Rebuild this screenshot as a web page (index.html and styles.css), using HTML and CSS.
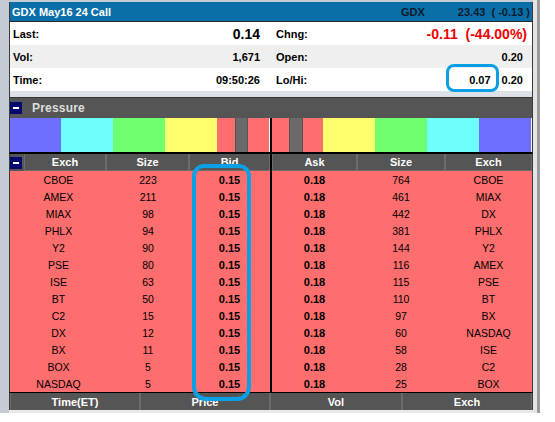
FILE: index.html
```html
<!DOCTYPE html>
<html>
<head>
<meta charset="utf-8">
<link rel="stylesheet" href="styles.css">
</head>
<body>
<div class="screen">
  <div class="gutter"></div>
  <div class="panel">
    <div class="title">
      <span class="title-name">GDX May16 24 Call</span>
      <span class="title-sym">GDX</span>
      <span class="title-px">23.43 &nbsp;( -0.13 )</span>
    </div>
    <div class="info">
      <div class="info-row">
        <div class="half"><span class="lbl">Last:</span><span class="val big">0.14</span></div>
        <div class="half rhalf"><span class="lbl">Chng:</span><span class="val chng">-0.11 &nbsp;(-44.00%)</span></div>
      </div>
      <div class="info-row alt">
        <div class="half"><span class="lbl">Vol:</span><span class="val">1,671</span></div>
        <div class="half rhalf"><span class="lbl">Open:</span><span class="val pr">0.20</span></div>
      </div>
      <div class="info-row">
        <div class="half"><span class="lbl">Time:</span><span class="val">09:50:26</span></div>
        <div class="half rhalf"><span class="lbl">Lo/Hi:</span><span class="lohi"><span class="val">0.07</span><span class="val hi">0.20</span></span></div>
      </div>
    </div>
    <div class="strip"></div>
    <div class="sec-head"><span class="tog"></span><span class="sec-title">Pressure</span></div>
    <div class="pressure">
      <div class="pside">
        <span class="blk c-blue w51"></span><span class="blk c-cyan w52"></span><span class="blk c-green w52"></span><span class="blk c-yellow w52"></span><span class="blk c-red w18"></span><span class="blk c-gray w13"></span><span class="blk c-red w21"></span><span class="blk c-white w1"></span>
      </div>
      <div class="pside">
        <span class="blk c-red w17"></span><span class="blk c-gray w14"></span><span class="blk c-red w20"></span><span class="blk c-yellow w52"></span><span class="blk c-green w52"></span><span class="blk c-cyan w52"></span><span class="blk c-blue w52"></span><span class="blk c-white w1"></span>
      </div>
    </div>
    <div class="book">
      <div class="side">
        <div class="hdr lhdr"><span class="hcell tcell"><span class="tog"></span></span><span class="hcell">Exch</span><span class="hcell">Size</span><span class="hcell">Bid</span></div>
        <div class="rows">
          <div class="row lrow"><span>CBOE</span><span>223</span><span class="b">0.15</span></div>
          <div class="row lrow"><span>AMEX</span><span>211</span><span class="b">0.15</span></div>
          <div class="row lrow"><span>MIAX</span><span>98</span><span class="b">0.15</span></div>
          <div class="row lrow"><span>PHLX</span><span>94</span><span class="b">0.15</span></div>
          <div class="row lrow"><span>Y2</span><span>90</span><span class="b">0.15</span></div>
          <div class="row lrow"><span>PSE</span><span>80</span><span class="b">0.15</span></div>
          <div class="row lrow"><span>ISE</span><span>63</span><span class="b">0.15</span></div>
          <div class="row lrow"><span>BT</span><span>50</span><span class="b">0.15</span></div>
          <div class="row lrow"><span>C2</span><span>15</span><span class="b">0.15</span></div>
          <div class="row lrow"><span>DX</span><span>12</span><span class="b">0.15</span></div>
          <div class="row lrow"><span>BX</span><span>11</span><span class="b">0.15</span></div>
          <div class="row lrow"><span>BOX</span><span>5</span><span class="b">0.15</span></div>
          <div class="row lrow"><span>NASDAQ</span><span>5</span><span class="b">0.15</span></div>
        </div>
      </div>
      <div class="side">
        <div class="hdr rhdr"><span class="hcell">Ask</span><span class="hcell">Size</span><span class="hcell">Exch</span></div>
        <div class="rows">
          <div class="row rrow"><span class="b">0.18</span><span>764</span><span>CBOE</span></div>
          <div class="row rrow"><span class="b">0.18</span><span>461</span><span>MIAX</span></div>
          <div class="row rrow"><span class="b">0.18</span><span>442</span><span>DX</span></div>
          <div class="row rrow"><span class="b">0.18</span><span>381</span><span>PHLX</span></div>
          <div class="row rrow"><span class="b">0.18</span><span>144</span><span>Y2</span></div>
          <div class="row rrow"><span class="b">0.18</span><span>116</span><span>AMEX</span></div>
          <div class="row rrow"><span class="b">0.18</span><span>115</span><span>PSE</span></div>
          <div class="row rrow"><span class="b">0.18</span><span>110</span><span>BT</span></div>
          <div class="row rrow"><span class="b">0.18</span><span>97</span><span>BX</span></div>
          <div class="row rrow"><span class="b">0.18</span><span>60</span><span>NASDAQ</span></div>
          <div class="row rrow"><span class="b">0.18</span><span>58</span><span>ISE</span></div>
          <div class="row rrow"><span class="b">0.18</span><span>28</span><span>C2</span></div>
          <div class="row rrow"><span class="b">0.18</span><span>25</span><span>BOX</span></div>
        </div>
      </div>
    </div>
    <div class="footer">
      <span class="fcell">Time(ET)</span><span class="fcell">Price</span><span class="fcell">Vol</span><span class="fcell">Exch</span>
    </div>
  </div>
  <div class="rgutter"><div class="rg-light"></div><div class="rg-line"></div></div>
  <div class="mark mark-lohi"></div>
  <div class="mark mark-bid"></div>
</div>
</body>
</html>
```

FILE: styles.css
```css
* { box-sizing: border-box; }
html, body { margin: 0; padding: 0; background: #ffffff; }
body { font-family: "Liberation Sans", Arial, sans-serif; font-size: 11px; color: #000; }

.screen { position: relative; display: flex; width: 555px; height: 422px; }
.gutter { width: 9px; height: 413px; background: #c4cbd3; }
.panel {
  width: 524px; height: 413px;
  padding-top: 2px;
  background: #e9e9e9;
  display: flex; flex-direction: column;
}
.panel > * { border-left: 1px solid #3a3a3a; border-right: 1px solid #3a3a3a; }
.screen::before {
  content: ""; position: absolute; left: 9px; top: 0; width: 524px; height: 2px; background: #c4cbd3;
}

.rgutter { display: flex; height: 413px; }
.rg-light { width: 4px; background: #e4e4e4; }
.rg-line { width: 3px; background: #9a9a9a; }

/* title */
.title {
  height: 20px; background: #0a6ea8; border-bottom: 1px solid #2a2a2a;
  display: flex; align-items: center; padding-left: 2px; padding-right: 2px;
}
.title-name { color: #fff; font-weight: bold; font-size: 11px; flex: 1; }
.title-sym { color: #0b1b2c; font-size: 11px; font-weight: bold; margin-right: 33px; }
.title-px { color: #0b1b2c; font-size: 11px; font-weight: bold; }

/* info */
.info { background: #fff; }
.info-row { height: 23px; display: flex; background: #fff; }
.info-row.alt { background: #efefef; }
.half { width: 261px; display: flex; align-items: center; justify-content: space-between; padding-left: 3px; padding-right: 11px; }
.rhalf { padding-left: 5px; padding-right: 9px; }
.lbl { font-weight: bold; font-size: 11px; }
.val { font-weight: bold; font-size: 11px; }
.big { font-size: 14px; }
.chng { color: #f00000; font-size: 14px; margin-right: -4px; }
.lohi { display: flex; align-items: center; }
.hi { margin-left: 11px; }

.strip { background: #dde2e8; border-bottom: 1px solid #333; height: 7px; }

.sec-head {
  height: 20px; background: #555555; display: flex; align-items: center;
}
.tog {
  display: inline-block; position: relative; width: 12px; height: 12px; background: #070770;
}
.tog::after {
  content: ""; position: absolute; left: 3px; top: 5px; width: 6px; height: 2px; background: #fff;
}
.sec-title { color: #dedede; font-weight: bold; font-size: 12px; margin-left: 10px; letter-spacing: 0.2px; }

/* pressure */
.pressure { display: flex; gap: 2px; background: #000; height: 36px; border-bottom: 2px solid #000; }
.pside { display: flex; width: 260px; height: 34px; }
.blk { display: block; height: 34px; }
.c-blue { background: #6e6eff; }
.c-cyan { background: #6effff; }
.c-green { background: #6eff6e; }
.c-yellow { background: #ffff6e; }
.c-red { background: #ff6e6e; }
.c-gray { background: #6a6a6a; border: 1px solid #555; border-top: 0; border-bottom: 0; }
.c-white { background: #f4f4f4; }
.w1 { width: 1px; } .w13 { width: 13px; } .w14 { width: 14px; } .w17 { width: 17px; } .w18 { width: 18px; }
.w20 { width: 20px; } .w21 { width: 21px; } .w51 { width: 51px; } .w52 { width: 52px; }

/* book */
.book { display: flex; gap: 2px; background: #000; border-bottom: 1px solid #000; }
.side { width: 260px; }
.hdr { display: grid; height: 17px; background: #555; }
.lhdr { grid-template-columns: 14px 82px 83px 81px; }
.rhdr { grid-template-columns: 85px 88px 87px; }
.hcell {
  display: flex; align-items: center; justify-content: center;
  color: #fff; font-weight: bold; font-size: 11px;
  border-left: 1px solid #6c6c6c; border-right: 1px solid #6c6c6c; border-bottom: 1px solid #6c6c6c;
}
.tcell { border: 0; justify-content: flex-start; }
.rows { background: #ff6e6e; }
.row { display: grid; height: 17px; align-items: center; text-align: center; font-size: 10.5px; }
.lrow { grid-template-columns: 97px 82px 81px; }
.rrow { grid-template-columns: 85px 88px 87px; }
.b { font-weight: bold; font-size: 11px; }

/* footer */
.footer { display: grid; grid-template-columns: 130px 130px 132px 130px; height: 17px; background: #555; }
.fcell {
  display: flex; align-items: center; justify-content: center;
  color: #fff; font-weight: bold; font-size: 11px;
  border-left: 1px solid #6c6c6c; border-right: 1px solid #6c6c6c;
}

/* annotations */
.mark { position: absolute; border: 3px solid #0aa0e6; }
.mark-lohi { left: 446px; top: 64px; width: 53px; height: 28px; border-radius: 8px; }
.mark-bid { left: 192px; top: 164px; width: 59px; height: 237px; border-width: 4px; border-radius: 12px 12px 14px 14px; }
```
